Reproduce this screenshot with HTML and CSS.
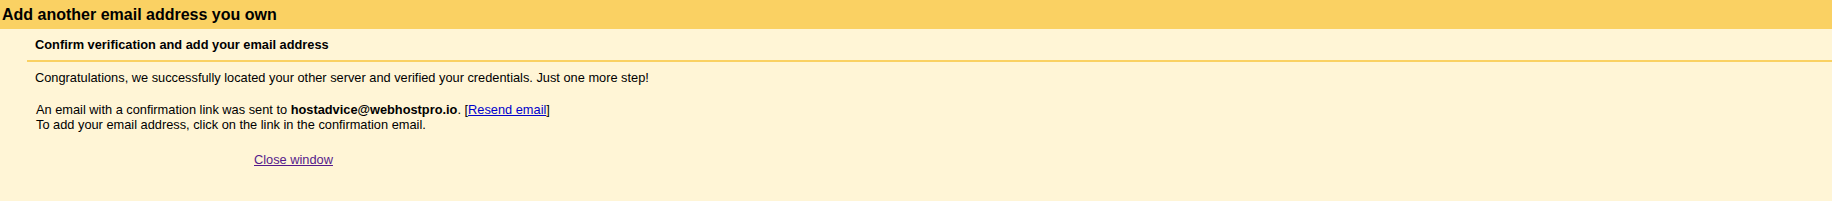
FILE: index.html
```html
<!DOCTYPE html>
<html lang="en">
<head>
<meta charset="UTF-8" />
<title>Add another email address you own</title>
<link rel="stylesheet" href="styles.css">
</head>
<body>

<div class="header">
  <h1>Add another email address you own</h1>
</div>

<div class="content">
  <div class="step-title">Confirm verification and add your email address</div>
  <p class="intro">Congratulations, we successfully located your other server and verified your credentials. Just one more step!</p>
  <div class="notice">
    An email with a confirmation link was sent to <b>hostadvice@webhostpro.io</b>. [<a href="#" class="resend">Resend email</a>]<br>
    To add your email address, click on the link in the confirmation email.
  </div>
  <div class="actions">
    <a href="#" class="close">Close window</a>
  </div>
</div>

</body>
</html>
```

FILE: styles.css
```css
body {
  margin: 0;
  padding: 0;
  font-family: "Liberation Sans", Arial, sans-serif;
  font-size: 12.8px;
  line-height: 15px;
  color: #000;
  background: #fff5d6;
  height: 201px;
}
/* Bandeau du haut */
.header {
  background: #fad163;
  height: 29px;
  display: flex;
  align-items: center;
}
.header h1 {
  margin: 0 0 0 2px;
  font-size: 16px;
  font-weight: bold;
  line-height: 19px;
}
.content {
  padding-left: 27px;
}
.step-title {
  font-weight: bold;
  padding: 8px 8px;
  border-bottom: 2px solid #fad163;
}
.intro {
  margin: 8px 0 0 8px;
}
.notice {
  margin: 17px 0 0 9px;
}
.resend {
  color: #0000cc;
}
.actions {
  margin-top: 20px;
  padding-left: 227px;
}
.close {
  color: #551a8b;
}
```
